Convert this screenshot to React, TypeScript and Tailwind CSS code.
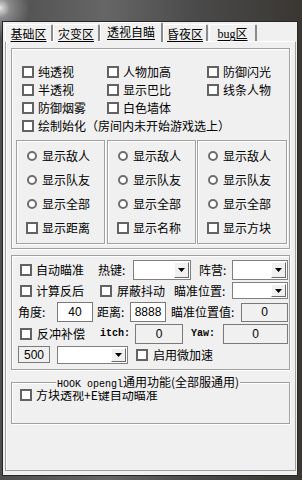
import React from "react";

// etched group frame, classic win32 look
const groupCls = "border border-[#a0a0a0] shadow-[inset_1px_1px_0_#fff,1px_1px_0_#fff]";

function Check() {
  return <span className="block w-[12px] h-[12px] shrink-0 border-2 border-[#636363] bg-white" />;
}

function Radio() {
  return (
    <span className="flex w-[12px] h-[12px] shrink-0 items-center justify-center">
      <span className="block w-[10px] h-[10px] rounded-full border-2 border-[#6e6e6e] bg-white" />
    </span>
  );
}

function Arrow() {
  return (
    <svg width="7" height="4" viewBox="0 0 7 4">
      <path d="M0 0h7L3.5 4z" fill="#000" />
    </svg>
  );
}

function Combo({ className }: { className: string }) {
  return (
    <div className={"flex shrink-0 bg-white border border-[#7f7f7f] " + className}>
      <div className="flex-1" />
      <div className="w-[15px] my-[1px] mr-[1px] flex items-center justify-center bg-[#f0f0f0] border border-t-white border-l-white border-r-[#6a6a6a] border-b-[#6a6a6a]">
        <Arrow />
      </div>
    </div>
  );
}

function Field({ className, value }: { className: string; value: string }) {
  return (
    <div
      className={
        "flex shrink-0 items-center justify-center border border-[#7a7a7a] font-['Liberation_Sans',sans-serif] text-[12px] " +
        className
      }
    >
      {value}
    </div>
  );
}

function Tab({ label, className }: { label: string; className: string }) {
  return (
    <div
      className={
        "flex items-center justify-center bg-[#f0f0f0] border-t border-l border-t-white border-l-white border-r-2 border-r-[#8a8a8a] rounded-t-[2px] " +
        className
      }
    >
      <span className="underline underline-offset-[2px] decoration-1">{label}</span>
    </div>
  );
}

const checks = [
  ["纯透视", "人物加高", "防御闪光"],
  ["半透视", "显示巴比", "线条人物"],
  ["防御烟雾", "白色墙体", ""],
];

const subGroups = ["显示距离", "显示名称", "显示方块"];

export default function App() {
  return (
    <div className="w-[302px] h-[480px] overflow-hidden pt-[21px] pl-[2px] text-black text-[12px] leading-[14px] font-['Noto_Sans_CJK_SC',sans-serif] bg-[radial-gradient(circle_at_0px_8px,#e6e6e6_0px,#8a8a8a_10px,transparent_30px),linear-gradient(90deg,#4e4e4e_0%,#666_35%,#4a4a4a_65%,#3a3732_100%)]">
      <div className="w-[296px] h-[455px] bg-[#f0f0f0] border border-[#262626] pl-[2px]">
        {/* tab strip */}
        <div className="flex items-end h-[19px]">
          <Tab label="基础区" className="w-[48px] h-[17px] pt-[2px]" />
          <Tab label="灾变区" className="w-[47px] h-[17px] pt-[2px]" />
          <Tab label="透视自瞄" className="relative z-10 w-[63px] h-[20px] -mb-[1px] pb-[2px]" />
          <Tab label="昏夜区" className="w-[45px] h-[17px] pt-[2px]" />
          <Tab
            label="bug区"
            className="ml-[1px] w-[48px] h-[17px] pt-[2px] font-['Liberation_Serif','Noto_Sans_CJK_SC',serif]"
          />
        </div>

        {/* tab page */}
        <div className="flex flex-col w-[291px] h-[430px] border border-[#a0a0a0] border-t-white shadow-[inset_1px_0_0_#fff] pl-[5px] pt-[6px]">
          {/* group 1 */}
          <div className={"shrink-0 w-[279px] h-[201px] pt-[14px] " + groupCls}>
            <div className="grid grid-cols-[85px_100px_1fr] pl-[10px]">
              {checks.map((row, r) =>
                row.map((t, c) => (
                  <div key={r + "-" + c} className="flex items-center gap-[4px] h-[18px]">
                    {t && <Check />}
                    {t && <span className="whitespace-nowrap">{t}</span>}
                  </div>
                ))
              )}
              <div className="col-span-3 flex items-center gap-[4px] h-[18px]">
                <Check />
                <span className="whitespace-nowrap">绘制始化（房间内未开始游戏选上）</span>
              </div>
            </div>

            <div className="flex pl-[4px] mt-[5px]">
              {subGroups.map((last, i) => (
                <div
                  key={last}
                  className={
                    "h-[104px] pt-[3px] pl-[9px] " +
                    groupCls +
                    (i === 0 ? " w-[89px]" : i === 1 ? " ml-[2px] w-[89px]" : " ml-[1px] w-[90px]")
                  }
                >
                  {["显示敌人", "显示队友", "显示全部"].map((t) => (
                    <div key={t} className="flex items-center gap-[4px] h-[24px]">
                      <Radio />
                      <span>{t}</span>
                    </div>
                  ))}
                  <div className="flex items-center gap-[4px] h-[24px]">
                    <Check />
                    <span>{last}</span>
                  </div>
                </div>
              ))}
            </div>
          </div>

          {/* group 2: aim */}
          <div className={"shrink-0 w-[279px] h-[115px] mt-[6px] pt-[3px] " + groupCls}>
            <div className="flex items-center h-[21px] pl-[8px]">
              <Check />
              <span className="ml-[4px] w-[62px]">自动瞄准</span>
              <span className="w-[35px]">热键:</span>
              <Combo className="w-[58px] h-[20px]" />
              <span className="ml-[8px] w-[33px]">阵营:</span>
              <Combo className="w-[56px] h-[20px]" />
            </div>
            <div className="flex items-center h-[21px] pl-[8px]">
              <Check />
              <span className="ml-[4px] w-[64px]">计算反后</span>
              <Check />
              <span className="ml-[5px] w-[57px]">屏蔽抖动</span>
              <span className="w-[58px] whitespace-nowrap">瞄准位置:</span>
              <Combo className="w-[56px] h-[17px]" />
            </div>
            <div className="flex items-center h-[22px] pl-[6px]">
              <span className="w-[39px]">角度:</span>
              <Field className="w-[36px] h-[20px] bg-white" value="40" />
              <span className="ml-[4px] w-[33px]">距离:</span>
              <Field className="w-[36px] h-[20px] bg-white" value="8888" />
              <span className="ml-[5px] w-[70px] whitespace-nowrap">瞄准位置值:</span>
              <Field className="w-[47px] h-[19px] bg-[#f0f0f0]" value="0" />
            </div>
            <div className="flex items-center h-[21px] pl-[8px]">
              <Check />
              <span className="ml-[5px] w-[63px]">反冲补偿</span>
              <span className="w-[35px] font-['Liberation_Mono',monospace] text-[10px] font-bold">itch:</span>
              <Field className="w-[48px] h-[20px] bg-[#f0f0f0]" value="0" />
              <span className="ml-[8px] w-[32px] font-['Liberation_Mono',monospace] text-[10px] font-bold">Yaw:</span>
              <Field className="w-[65px] h-[20px] bg-[#f0f0f0]" value="0" />
            </div>
            <div className="flex items-center h-[21px] pl-[6px]">
              <Field className="w-[32px] h-[17px] bg-[#f0f0f0]" value="500" />
              <Combo className="ml-[7px] w-[71px] h-[18px]" />
              <span className="ml-[8px]">
                <Check />
              </span>
              <span className="ml-[5px]">启用微加速</span>
            </div>
          </div>

          {/* group 3: hook */}
          <div className={"shrink-0 relative flex flex-col w-[279px] mt-[12px] pt-[3px] pb-[19px] " + groupCls}>
            <span className="absolute left-[44px] -top-[7px] px-[1px] leading-[12px] bg-[#f0f0f0] whitespace-nowrap">
              <span className="font-['Liberation_Mono',monospace] text-[10px]">HOOK opengl</span>
              通用功能(全部服通用)
            </span>
            <div className="flex items-center h-[18px] shrink-0 pl-[8px]">
              <Check />
              <span className="ml-[4px]">方块透视+E键自动瞄准</span>
            </div>
          </div>
        </div>
      </div>
    </div>
  );
}
